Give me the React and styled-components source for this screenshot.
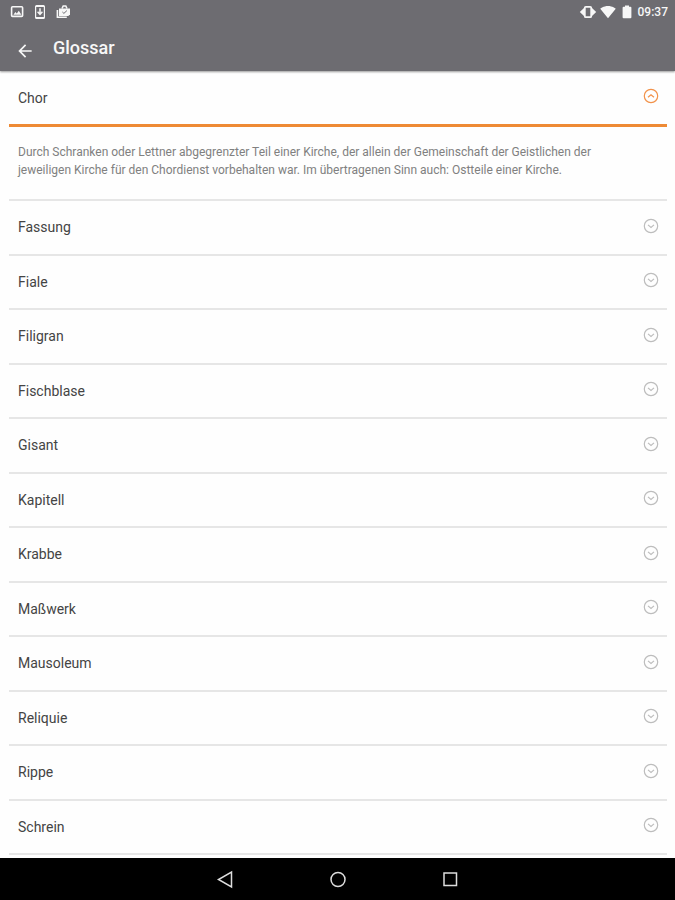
import { useState } from "react";
import styled, { createGlobalStyle } from "styled-components";
import { MdArrowBack, MdSignalWifi4Bar } from "react-icons/md";

const entries = [
    {
        term: "Chor",
        text: "Durch Schranken oder Lettner abgegrenzter Teil einer Kirche, der allein der Gemeinschaft der Geistlichen der jeweiligen Kirche für den Chordienst vorbehalten war. Im übertragenen Sinn auch: Ostteile einer Kirche."
    },
    { term: "Fassung" },
    { term: "Fiale" },
    { term: "Filigran" },
    { term: "Fischblase" },
    { term: "Gisant" },
    { term: "Kapitell" },
    { term: "Krabbe" },
    { term: "Maßwerk" },
    { term: "Mausoleum" },
    { term: "Reliquie" },
    { term: "Rippe" },
    { term: "Schrein" }
];

export default function App() {

    const [openTerm, setOpenTerm] = useState("Chor");

    function toggle(term) {
        setOpenTerm(openTerm === term ? "" : term);
    }

    return (
        <Screen>
            <GlobalStyle />

            <Header>
                <StatusBar>
                    <Notifications>
                        <ImageIcon />
                        <DownloadIcon />
                        <StoreIcon />
                    </Notifications>

                    <System>
                        <VibrateIcon />
                        <MdSignalWifi4Bar size={16} />
                        <BatteryIcon />
                        <Clock>09:37</Clock>
                    </System>
                </StatusBar>

                <AppBar>
                    <BackButton type="button" aria-label="Zurück">
                        <MdArrowBack size={20} />
                    </BackButton>
                    <Title>Glossar</Title>
                </AppBar>
            </Header>

            <List>
                {entries.map(({ term, text }) => {
                    const open = openTerm === term;

                    return (
                        <Entry key={term} $open={open}>
                            <Term type="button" $open={open} aria-expanded={open} onClick={() => toggle(term)}>
                                <span>{term}</span>
                                <ToggleIcon open={open} />
                            </Term>
                            {open && text && <Description>{text}</Description>}
                        </Entry>
                    );
                })}
            </List>

            <NavBar>
                <NavButton type="button" aria-label="Zurück">
                    <NavIcon><path d="M17.5 4v15L4.5 11.5z" /></NavIcon>
                </NavButton>
                <NavButton type="button" aria-label="Startseite">
                    <NavIcon><circle cx="11" cy="11.5" r="7" /></NavIcon>
                </NavButton>
                <NavButton type="button" aria-label="Übersicht">
                    <NavIcon><path d="M5 5h12.5v12.5H5z" /></NavIcon>
                </NavButton>
            </NavBar>
        </Screen>
    )
}

function ToggleIcon({ open }) {
    return (
        <svg width="16" height="16" viewBox="0 0 16 16" fill="none" stroke="currentColor" strokeWidth="1.2" aria-hidden="true">
            <circle cx="8" cy="8" r="6.7" />
            <path d={open ? "M5 9.3l3-2.6 3 2.6" : "M5 6.9l3 2.6 3-2.6"} />
        </svg>
    )
}

function ImageIcon() {
    return (
        <svg width="14" height="16" viewBox="0 0 14 16" fill="none" stroke="currentColor" aria-hidden="true">
            <rect x="1.6" y="2.8" width="11" height="9.6" rx="1" strokeWidth="1.6" />
            <path d="M3.4 10.8l2-2.8 1.4 1.6 2-2.8 2.6 4z" fill="currentColor" stroke="none" />
        </svg>
    )
}

function DownloadIcon() {
    return (
        <svg width="16" height="16" viewBox="0 0 16 16" fill="none" stroke="currentColor" aria-hidden="true">
            <rect x="3.6" y="1.6" width="8.8" height="12.8" rx="1" strokeWidth="1.2" />
            <path d="M4 2.2h8M4 13.8h8" strokeWidth="1.6" />
            <path d="M8 4.2v6M5.6 7.8L8 10.4l2.4-2.6" strokeWidth="1.5" />
        </svg>
    )
}

function StoreIcon() {
    return (
        <svg width="16" height="16" viewBox="0 0 16 16" fill="none" stroke="currentColor" aria-hidden="true">
            <path d="M1.4 6v7.2h9.4" strokeWidth="1.6" />
            <path d="M3 4.5h11v5.8L12.4 12H3z" fill="currentColor" stroke="none" />
            <path d="M6 4.5L7.2 2h2.6L11 4.5" strokeWidth="1.6" />
            <path d="M6.4 8l1.5 1.4 3-2.8" stroke="#6d6c71" strokeWidth="1" />
        </svg>
    )
}

function VibrateIcon() {
    return (
        <svg width="18" height="16" viewBox="0 0 18 16" fill="none" stroke="currentColor" aria-hidden="true">
            <rect x="5.8" y="2.8" width="6.4" height="10.4" rx="1" strokeWidth="1.8" />
            <path d="M5 4L.8 8 5 12zM13 4l4.2 4-4.2 4z" fill="currentColor" stroke="none" />
        </svg>
    )
}

function BatteryIcon() {
    return (
        <svg width="16" height="16" viewBox="0 0 16 16" fill="currentColor" aria-hidden="true">
            <path d="M6 1.4h4v1.4h1.4a1 1 0 0 1 1 1v9.4a1 1 0 0 1-1 1H4.6a1 1 0 0 1-1-1V3.8a1 1 0 0 1 1-1H6z" />
        </svg>
    )
}

const GlobalStyle = createGlobalStyle`
    * {
        box-sizing: border-box;
    }

    body {
        margin: 0;

        color: #444444;
        font-family: Roboto, "Liberation Sans", sans-serif;

        background-color: #fefefe;
    }

    button {
        color: inherit;
        font-family: inherit;

        padding: 0;

        border: none;
        background: none;
        cursor: pointer;
    }

    svg {
        display: block;
        flex-shrink: 0;
    }
`;

const Screen = styled.div`
    min-height: 100vh;

    display: flex;
    flex-direction: column;
`;

const Header = styled.header`
    color: #f7f7f7;

    background-color: #6d6c71;
    box-shadow: 0 1px 2px rgba(0, 0, 0, 0.4);
`;

const StatusBar = styled.div`
    height: 24px;

    display: flex;
    align-items: center;
    justify-content: space-between;

    padding: 0 7px 0 10px;
`;

const Notifications = styled.div`
    display: flex;
    align-items: center;
    gap: 8px;
`;

const System = styled.div`
    display: flex;
    align-items: center;
    gap: 3px;
`;

const Clock = styled.time`
    font-size: 12px;
    font-weight: 500;
    line-height: 16px;
`;

const AppBar = styled.div`
    height: 47px;

    display: flex;
    align-items: center;
    gap: 18px;

    padding: 2px 15px 0;
`;

const BackButton = styled.button`
    display: flex;

    padding-top: 4px;
`;

const Title = styled.h1`
    font-size: 18px;
    font-weight: 500;
    line-height: 24px;

    margin: 0 0 2px;
`;

const List = styled.ul`
    flex: 1;

    display: flex;
    flex-direction: column;

    list-style: none;

    margin: 0;
    padding: 0 8px 3px 9px;
`;

const Entry = styled.li`
    min-height: 54px;

    display: flex;
    flex-direction: column;
    flex: ${props => props.$open ? "none" : "1"};

    border-bottom: 2px solid #e6e6e6;
`;

const Term = styled.button`
    width: 100%;
    min-height: ${props => props.$open ? "56px" : "52px"};

    display: flex;
    flex: 1;
    align-items: center;
    justify-content: space-between;

    font-size: 14px;
    line-height: 20px;
    text-align: left;

    padding: 0 8px 0 9px;

    border-bottom: ${props => props.$open ? "3px solid #ee8a35" : "none"};

    svg {
        color: ${props => props.$open ? "#f2924a" : "#bdbdbd"};

        margin-bottom: 3px;
    }
`;

const Description = styled.p`
    color: #808080;
    font-size: 12px;
    line-height: 18px;

    margin: 0;
    padding: 16px 50px 20px 9px;
`;

const NavBar = styled.nav`
    height: 42px;

    display: flex;
    justify-content: center;

    color: #dddddd;

    background-color: #000000;
`;

const NavButton = styled.button`
    width: calc(100% / 6);

    display: flex;
    align-items: center;
    justify-content: center;
`;

const NavIcon = styled.svg.attrs({ viewBox: "0 0 22 22", "aria-hidden": true })`
    width: 22px;
    height: 22px;

    fill: none;
    stroke: currentColor;
    stroke-width: 1.5;
`;
